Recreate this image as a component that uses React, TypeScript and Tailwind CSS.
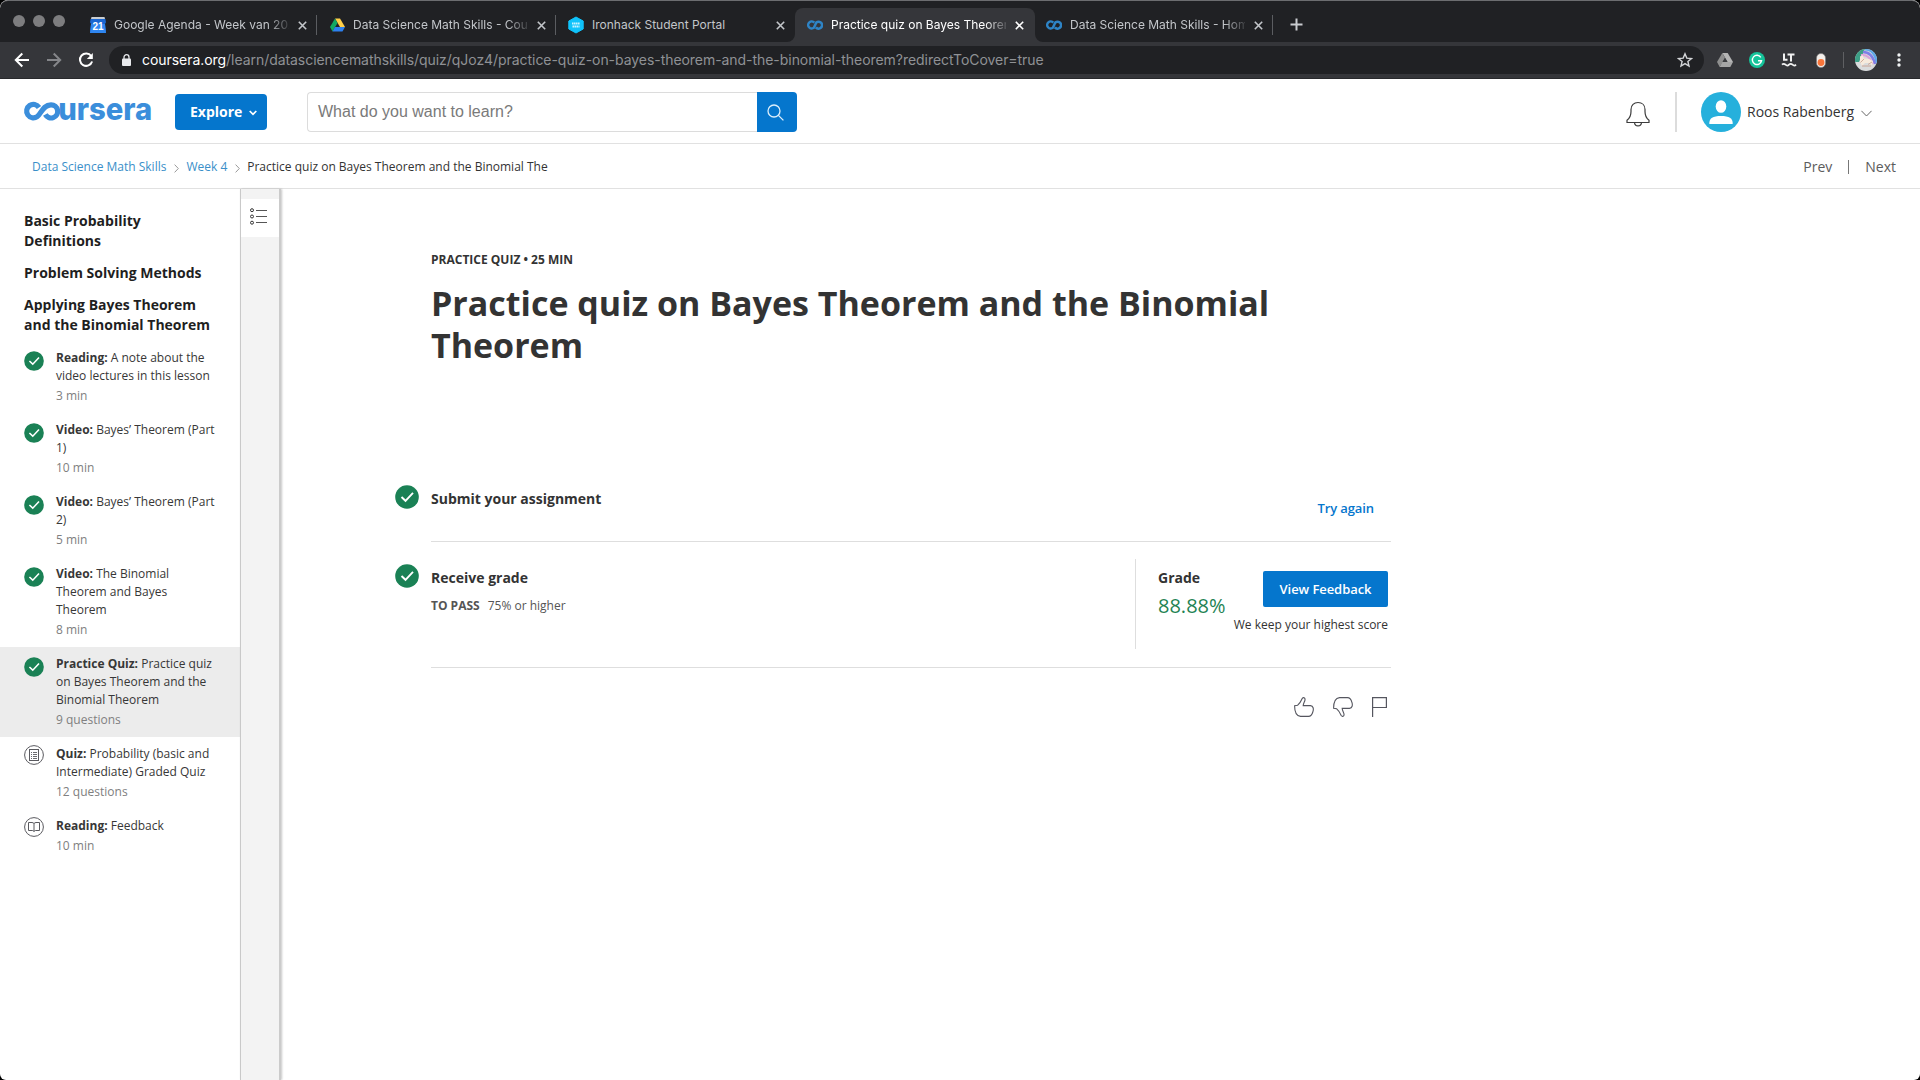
import React from "react";

type Tab = { title: string; icon: React.ReactNode; active?: boolean; fade?: boolean };

const CalendarIcon = () => (
  <svg width="16" height="16" viewBox="0 0 16 16">
    <path d="M1.5 0h13l.6 2.5H.9z" fill="#c9cdd1" />
    <path d="M.6 2h14.8L16 5.2 15 7l1 9H0L1 7 0 5.200z" fill="#1a67d2" />
    <path d="M1 7h14l1 9H0z" fill="#2f86f0" />
    <text x="8" y="12.700" textAnchor="middle" fontFamily="Liberation Sans, sans-serif" fontSize="10" fontWeight="700" fill="#fff">21</text>
  </svg>
);

const DriveIcon = () => (
  <svg width="15" height="14" viewBox="0 0 15 14">
    <path d="M5 .5h5L15 9h-5z" fill="#ffcf48" />
    <path d="M5 .5 0 9l2.500 4.500L7.500 5z" fill="#11a861" />
    <path d="M5 9h10l-2.500 4.500h-10z" fill="#2d80ef" />
  </svg>
);

const IronhackIcon = () => (
  <svg width="16" height="18" viewBox="0 0 16 18">
    <path d="M8 1l7.200 4v8L8 17 .8 13V5z" fill="#10c3fb" stroke="#10c3fb" strokeLinejoin="round" />
    <path d="M4 7.500h8M4.500 10.500h7" stroke="#c8f2ff" strokeWidth="2" strokeDasharray="1.600 .4" />
  </svg>
);

const CourseraMark = () => (
  <svg width="16" height="10" viewBox="0 0 16 10" fill="none" stroke="#2e84c6" strokeWidth="2.500">
    <path d="M7.300 2.600A3.500 3.500 0 1 0 7 7.600L9.300 2.500A3.500 3.500 0 1 1 8.900 7.400" />
  </svg>
);

const tabs: Tab[] = [
  { title: "Google Agenda - Week van 20.", icon: <CalendarIcon />, fade: true },
  { title: "Data Science Math Skills - Cour", icon: <DriveIcon />, fade: true },
  { title: "Ironhack Student Portal", icon: <IronhackIcon /> },
  { title: "Practice quiz on Bayes Theorem", icon: <CourseraMark />, active: true, fade: true },
  { title: "Data Science Math Skills - Home", icon: <CourseraMark />, fade: true },
];

const Cross = () => (
  <svg width="9" height="9" viewBox="0 0 9 9" stroke="currentColor" strokeWidth="1.600" className="shrink-0">
    <path d="M.8.8l7.400 7.400M8.200.8L.8 8.200" />
  </svg>
);

const BrowserTab = ({ tab, separator }: { tab: Tab; separator: boolean }) => (
  <div
    className={
      tab.active
        ? "relative -mr-px flex h-[34px] w-[240px] items-center rounded-t-lg bg-[#35363a] pl-3 text-white"
        : "relative flex h-[34px] w-[239px] items-center pl-3 text-[#c3c6ca]"
    }
  >
    {tab.active && (
      <>
        <svg width="8" height="8" className="absolute bottom-0 -left-2"><path d="M8 0v8H0A8 8 0 0 0 8 0z" fill="#35363a" /></svg>
        <svg width="8" height="8" className="absolute -right-2 bottom-0"><path d="M0 0v8h8A8 8 0 0 1 0 0z" fill="#35363a" /></svg>
      </>
    )}
    <span className="flex w-4 shrink-0 justify-center">{tab.icon}</span>
    <span
      className={
        tab.fade
          ? "ml-2 w-[175px] shrink-0 overflow-hidden text-xs whitespace-nowrap [mask-image:linear-gradient(to_right,#000_154px,transparent_179px)]"
          : "ml-2 w-[175px] shrink-0 overflow-hidden text-xs whitespace-nowrap"
      }
    >
      {tab.title}
    </span>
    <span className="ml-[9px] flex"><Cross /></span>
    {separator && <span className="absolute top-[7px] right-0 h-5 w-px bg-[#5b5d61]" />}
  </div>
);

const Browser = () => (
  <header className="font-[Inter,sans-serif]">
    <div className="flex h-[42px] items-end rounded-t-lg border-t border-[#6c6d70] bg-[#202124]">
      <div className="flex h-[41px] w-[78px] shrink-0 gap-2 pt-[14px] pl-[13px]">
        <span className="size-3 rounded-full bg-[#7d7d7f]" />
        <span className="size-3 rounded-full bg-[#7d7d7f]" />
        <span className="size-3 rounded-full bg-[#7d7d7f]" />
      </div>
      {tabs.map((t, i) => (
        <BrowserTab key={i} tab={t} separator={i !== 2 && i !== 3} />
      ))}
      <svg width="13" height="13" viewBox="0 0 13 13" stroke="#c9ccd0" strokeWidth="2" className="mb-[11px] ml-[17px]">
        <path d="M6.500.5v12M.5 6.500h12" />
      </svg>
    </div>
    <div className="flex h-[37px] items-center border-b border-[#28292c] bg-[#35363a] pl-[14px]">
      <svg width="16" height="16" viewBox="0 0 16 16" fill="none" stroke="#fff" strokeWidth="2"><path d="M15 8H2M8.300 1.500L1.800 8l6.500 6.500" /></svg>
      <svg width="16" height="16" viewBox="0 0 16 16" fill="none" stroke="#85868a" strokeWidth="2" className="ml-4"><path d="M1 8h13M7.700 1.500L14.200 8l-6.500 6.500" /></svg>
      <svg width="16" height="16" viewBox="0 0 16 16" fill="none" stroke="#fff" strokeWidth="2" className="ml-4">
        <path d="M13.200 4A6.200 6.200 0 1 0 14.100 9.500" />
        <path d="M14.800 1v6h-6z" fill="#fff" stroke="none" />
      </svg>
      <div className="ml-[15px] flex h-7 w-[1595px] items-center rounded-full bg-[#202124] pl-[13px]">
        <svg width="9" height="12" viewBox="0 0 9 12"><rect y="4.500" width="9" height="7.500" rx="1" fill="#e8eaed" /><path d="M2 5V3.200a2.500 2.500 0 0 1 5 0V5" fill="none" stroke="#e8eaed" strokeWidth="1.300" /></svg>
        <div className="ml-[11px] text-sm tracking-[-0.050px] whitespace-nowrap text-[#8f9195]">
          <span className="text-white">coursera.org</span>/learn/datasciencemathskills/quiz/qJoz4/practice-quiz-on-bayes-theorem-and-the-binomial-theorem?redirectToCover=true
        </div>
        <svg width="16" height="16" viewBox="0 0 16 16" fill="none" stroke="#d3d5d8" strokeWidth="1.400" className="mr-[11px] ml-auto">
          <path d="M8 1.800l1.800 4.300 4.700.4-3.600 3 1.100 4.600L8 11.600 4 14.100l1.100-4.600-3.600-3 4.700-.4z" />
        </svg>
      </div>
      <svg width="16" height="14" viewBox="0 0 16 14" className="ml-[13px]">
        <path d="M5.300 0h5.400L16 9h-5.400z" fill="#b4b4b4" />
        <path d="M5.300 0L0 9l2.700 5L8 4.800z" fill="#8e8e8e" />
        <path d="M5.300 9H16l-2.700 5H2.700z" fill="#a5a5a5" />
        <path d="M8 5l2.400 4H5.600z" fill="#3c3d40" />
      </svg>
      <svg width="16" height="16" viewBox="0 0 16 16" fill="none" className="ml-4">
        <circle cx="8" cy="8" r="8" fill="#15c39a" />
        <path d="M11.800 5.300A4.600 4.600 0 1 0 12.500 8.800H9" stroke="#fff" strokeWidth="1.400" />
      </svg>
      <svg width="16" height="14" viewBox="0 0 16 14" fill="none" stroke="#f1f1f1" strokeWidth="2" className="ml-4">
        <path d="M3 .5v6.200h3.500M6.500 1.500h7M10 1.500v7" />
        <path d="M1 11.700q1.700-1.800 3.500 0t3.500 0 3.500 0 3.500 0" strokeWidth="1.800" />
      </svg>
      <svg width="10" height="15" viewBox="0 0 10 15" className="ml-[19px]">
        <rect x=".5" y=".5" width="9" height="14" rx="4.500" fill="#f3eeea" stroke="#77777a" strokeWidth=".6" />
        <circle cx="5" cy="9.500" r="3.400" fill="#f9753a" />
      </svg>
      <span className="ml-[17px] h-4 w-px bg-[#5f6063]" />
      <svg width="22" height="22" viewBox="0 0 22 22" className="ml-[11px]">
        <clipPath id="avatar"><circle cx="11" cy="11" r="11" /></clipPath>
        <g clipPath="url(#avatar)">
          <rect width="22" height="22" fill="#d9dbdc" />
          <path d="M0 0h10L4 13H0z" fill="#3d9f86" />
          <path d="M10 0Q20 0 22 14" fill="none" stroke="#5fa8e8" strokeWidth="3" />
          <path d="M8 3Q17 3 20 15" fill="none" stroke="#7f7fe6" strokeWidth="2.500" />
          <path d="M6 6Q14 5 18 15" fill="none" stroke="#dba0d8" strokeWidth="2" />
          <path d="M5 13V7.500L7.500 6 9 9.500 14 10 18 12 17 16.500 14.500 14H10L7 17z" fill="#f6eadc" />
          <path d="M5.500 13.500L9 10M13 15.500l4-2.500M7 17h9" stroke="#c79a86" strokeWidth=".8" />
        </g>
      </svg>
      <svg width="4" height="14" viewBox="0 0 4 14" fill="#f1f3f4" className="ml-[20px]"><circle cx="2" cy="2" r="1.700" /><circle cx="2" cy="7" r="1.700" /><circle cx="2" cy="12" r="1.700" /></svg>
    </div>
  </header>
);

const Logo = () => (
  <svg width="129" height="22" viewBox="0 0 129 22" className="mt-[-2px] overflow-visible" aria-label="coursera">
    <path d="M15 7.500A6.700 6.700 0 1 0 13.200 16.600C17.200 14 18.800 4.800 27 4.800A6.600 6.600 0 1 1 21.300 14.600" fill="none" stroke="#3b8edb" strokeWidth="5.200" />
    <text x="34.200" y="20.300" textLength="94" lengthAdjust="spacingAndGlyphs" fontFamily="Inter, sans-serif" fontSize="31.500" fontWeight="800" fill="#3b8edb">ursera</text>
  </svg>
);

const TopBar = () => (
  <div className="flex h-[65px] items-center border-b border-[#e1e1e1] pt-[2px] pl-6">
    <Logo />
    <button className="ml-[22px] flex h-9 w-[92px] items-center rounded-sm bg-[#0576cd] pl-[15px] text-sm font-bold text-white">
      Explore
      <svg width="8" height="6" viewBox="0 0 8 6" fill="none" stroke="#fff" strokeWidth="1.700" className="mt-0.5 ml-[7px]"><path d="M.7 1L4 4.400 7.300 1" /></svg>
    </button>
    <div className="ml-10 flex">
      <div className="flex h-10 w-[450px] items-center rounded-l-sm border border-r-0 border-[#dcdcdc] pb-px pl-[10px] font-['Liberation_Sans',Arial,sans-serif] text-base text-[#7a7a7a]">
        What do you want to learn?
      </div>
      <button className="flex h-10 w-10 items-center justify-center rounded-r-sm bg-[#0576cd]">
        <svg width="17" height="17" viewBox="0 0 17 17" fill="none" stroke="#dceefb" strokeWidth="1.300" className="-ml-1"><circle cx="7" cy="7" r="6" /><path d="M11.400 11.400l5 5" /></svg>
      </button>
    </div>
    <div className="ml-auto flex items-center">
      <svg width="24" height="26" viewBox="0 0 24 26" fill="none" stroke="#3c3c3c" strokeWidth="1.200" className="mt-[3px]">
        <path d="M1 21.500V19.300C4 17 5 14 5 10.500V8.500C5 4 8 1.500 12 1.500S19 4 19 8.500V10.500C19 14 20 17 23 19.300V21.500z" />
        <path d="M8.500 21.500C8.800 26 15.200 26 15.500 21.500" />
      </svg>
      <span className="ml-[25px] h-10 w-[2px] bg-[#dcdcdc]" />
      <svg width="40" height="40" viewBox="0 0 40 40" className="ml-6">
        <circle cx="20" cy="20" r="20" fill="#26b0dc" />
        <ellipse cx="20" cy="14.500" rx="5.300" ry="6.300" fill="#fff" />
        <path d="M8.300 32C8 26 12 24 20 24S32 26 31.700 32z" fill="#fff" />
      </svg>
      <span className="ml-[6px] text-sm text-[#333]">Roos Rabenberg</span>
      <svg width="11" height="7" viewBox="0 0 11 7" fill="none" stroke="#666" className="mt-0.5 mr-12 ml-[7px]"><path d="M.4.800l5.100 5.200L10.600.800" /></svg>
    </div>
  </div>
);

const Chevron = () => (
  <svg width="5" height="9" viewBox="0 0 5 9" fill="none" stroke="#999" className="mt-0.5"><path d="M.6.600L4.300 4.500.6 8.400" /></svg>
);

const Breadcrumbs = () => (
  <div className="flex h-[45px] items-center border-b border-[#e1e1e1] pt-[2px] pl-8 text-xs text-[#333]">
    <span className="text-[#3a8fc9]">Data Science Math Skills</span>
    <span className="mx-[7.5px]"><Chevron /></span>
    <span className="text-[#3a8fc9]">Week 4</span>
    <span className="mx-[7.5px]"><Chevron /></span>
    <span>Practice quiz on Bayes Theorem and the Binomial The</span>
    <div className="mr-6 ml-auto flex items-center text-sm text-[#5c5c5c]">
      Prev
      <span className="mr-[16px] ml-[16px] h-[14px] w-px bg-[#777]" />
      Next
    </div>
  </div>
);

const Check = ({ size }: { size: number }) => (
  <svg width={size} height={size} viewBox="0 0 24 24" fill="none" className="shrink-0">
    <circle cx="12" cy="12" r="11.800" fill="#1a8155" />
    <path d="M6.500 12l4 3.800 7.500-8" stroke="#fff" strokeWidth="1.900" />
  </svg>
);

const QuizIcon = () => (
  <svg width="20" height="20" viewBox="0 0 20 20" fill="none" stroke="#5a5a5f" className="shrink-0">
    <circle cx="10" cy="10" r="9.400" />
    <rect x="5.500" y="4.500" width="9" height="11" />
    <path d="M9 7.500h4M9 9.500h4M9 11.500h4M9 13.500h4M7 7.500h1M7 9.500h1M7 11.500h1M7 13.500h1" strokeWidth=".9" />
  </svg>
);

const BookIcon = () => (
  <svg width="20" height="20" viewBox="0 0 20 20" fill="none" stroke="#5a5a5f" className="shrink-0">
    <circle cx="10" cy="10" r="9.400" />
    <path d="M10 14.500V6.500Q9 5.500 8 5.500H4.500V13.500H8.500Q9.500 13.500 10 14.500 10.500 13.500 11.500 13.500H15.500V5.500H12Q11 5.500 10 6.500" />
  </svg>
);

const lessons = [
  { kind: "Reading", name: "A note about the video lectures in this lesson", meta: "3 min", icon: "check" },
  { kind: "Video", name: "Bayes’ Theorem (Part 1)", meta: "10 min", icon: "check" },
  { kind: "Video", name: "Bayes’ Theorem (Part 2)", meta: "5 min", icon: "check" },
  { kind: "Video", name: "The Binomial Theorem and Bayes Theorem", meta: "8 min", icon: "check" },
  { kind: "Practice Quiz", name: "Practice quiz on Bayes Theorem and the Binomial Theorem", meta: "9 questions", icon: "check", active: true },
  { kind: "Quiz", name: "Probability (basic and Intermediate) Graded Quiz", meta: "12 questions", icon: "quiz" },
  { kind: "Reading", name: "Feedback", meta: "10 min", icon: "book" },
];

const Sidebar = () => (
  <aside className="w-[240px] shrink-0 pt-[22px]">
    <div className="mb-[6px] flex flex-col gap-3 px-6 text-sm leading-5 font-bold text-[#1f1f1f]">
      <h3>Basic Probability Definitions</h3>
      <h3 className="whitespace-nowrap">Problem Solving Methods</h3>
      <h3>Applying Bayes Theorem and the Binomial Theorem</h3>
    </div>
    {lessons.map((l, i) => (
      <div key={i} className={l.active ? "flex bg-[#ececec] py-2 pl-6" : "flex py-2 pl-6"}>
        <span className={l.icon === "check" ? "mt-0.5" : ""}>
          {l.icon === "check" ? <Check size={20} /> : l.icon === "quiz" ? <QuizIcon /> : <BookIcon />}
        </span>
        <div className="ml-3 w-[164px] text-xs leading-[18px] text-[#373737]">
          <p><b>{l.kind}:</b> {l.name}</p>
          <p className="mt-0.5 text-[#808080]">{l.meta}</p>
        </div>
      </div>
    ))}
  </aside>
);

const Rail = () => (
  <div className="w-[41px] shrink-0 border-r-2 border-l border-r-[#cbcbcb] border-l-[#c9c9c9] bg-[#f3f3f3] pt-[10px] shadow-[1px_0_2px_rgba(0,0,0,0.22)]">
    <div className="flex h-[38px] w-[38px] items-start bg-white pt-[9px] pl-[9px]">
      <svg width="17" height="17" viewBox="0 0 17 17" fill="none" stroke="#333">
        <circle cx="2" cy="2.200" r="1.500" /><circle cx="2" cy="8.500" r="1.500" /><circle cx="2" cy="14.700" r="1.500" />
        <path d="M6 2.500h11M6 8.500h11M6 14.500h11" stroke="#555" />
      </svg>
    </div>
  </div>
);

const Quiz = () => (
  <main className="w-[1110px] pt-[62px] pl-[114px] text-[#333]">
    <div className="pl-9">
      <p className="text-xs leading-[18px] font-bold">PRACTICE QUIZ • 25 MIN</p>
      <h1 className="mt-[13px] h-[84px] w-[900px] text-[34px] leading-[42px] font-bold">Practice quiz on Bayes Theorem and the Binomial Theorem</h1>
    </div>
    <section className="mt-[119px] flex">
      <Check size={24} />
      <div className="ml-3 flex h-[57px] w-[960px] shrink-0 justify-between border-b border-[#dedede]">
        <h2 className="pt-1 text-sm leading-5 font-bold">Submit your assignment</h2>
        <button className="mr-[17px] h-5 pt-[13px] text-[13px] leading-5 font-semibold tracking-[-0.1px] text-[#0576cd]">Try again</button>
      </div>
    </section>
    <section className="flex pt-[22px]">
      <Check size={24} />
      <div className="-mt-[22px] ml-3 flex h-[126px] w-[960px] shrink-0 border-b border-[#dedede] pt-[17px]">
        <div className="w-[704px] pt-[9px]">
          <h2 className="text-sm leading-5 font-bold">Receive grade</h2>
          <p className="mt-[9px] flex gap-2 text-xs leading-[18px] text-[#555]"><b>TO PASS</b><span>75% or higher</span></p>
        </div>
        <div className="flex h-[90px] grow border-l border-[#dedede] pl-[22px]">
          <div className="pt-[9px]">
            <h2 className="text-sm leading-5 font-bold">Grade</h2>
            <p className="mt-[6px] w-[68px] text-xl leading-6 text-[#1f8354]">88.88%</p>
          </div>
          <div className="mr-[3px] ml-auto flex flex-col items-end pt-3">
            <button className="h-9 w-[125px] rounded-xs bg-[#0576cd] pt-px text-[13px] font-semibold tracking-[-0.07px] text-white">View Feedback</button>
            <p className="mt-[9px] text-xs leading-[18px] whitespace-nowrap">We keep your highest score</p>
          </div>
        </div>
      </div>
    </section>
    <div className="mt-[29px] mr-1 flex justify-end gap-[19px]">
      <svg width="20" height="20" viewBox="0 0 20 20" fill="none" stroke="#55565f" strokeWidth="1.100">
        <path d="M.6 8.700L3.500 8.300C5.500 6.500 7 4.500 8.200 1.500C9.300 0 11.300 .7 11 2.800C10.700 4.800 9.300 6.300 9.200 8.600H16.500C19.300 8.800 19.900 12 18.800 15C18 18 16.500 19.400 14.500 19.400H6.500C2.500 19 .6 15 .6 8.700z" />
      </svg>
      <svg width="20" height="20" viewBox="0 0 20 20" fill="none" stroke="#55565f" strokeWidth="1.100">
        <path d="M.6 11.300L3.500 11.700C5.500 13.500 7 15.500 8.200 18.500C9.300 20 11.300 19.300 11 17.200C10.700 15.200 9.300 13.700 9.200 11.400H16.500C19.300 11.200 19.900 8 18.800 5C18 2 16.500 .6 14.500 .6H6.500C2.500 1 .6 5 .6 11.300z" />
      </svg>
      <svg width="15" height="20" viewBox="0 0 15 20" fill="none" stroke="#55565f" strokeWidth="1.200"><path d="M.6 20V.6H14.400V10.500H.6" /></svg>
    </div>
  </main>
);

export default function App() {
  return (
    <div className="h-[1080px] w-[1920px] overflow-hidden bg-black">
      <div className="flex h-full flex-col overflow-hidden rounded-lg rounded-b-md bg-white font-['Open_Sans',sans-serif]">
        <Browser />
        <TopBar />
        <Breadcrumbs />
        <div className="flex grow">
          <Sidebar />
          <Rail />
          <Quiz />
        </div>
      </div>
    </div>
  );
}
